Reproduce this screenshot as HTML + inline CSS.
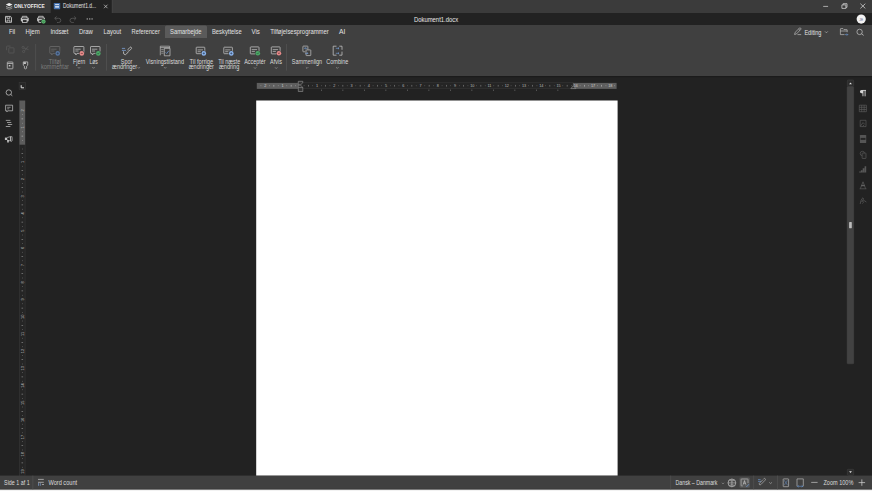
<!DOCTYPE html>
<html><head><meta charset="utf-8">
<style>
*{margin:0;padding:0}
html,body{width:872px;height:491px;overflow:hidden;background:#222}
svg{display:block;font-family:"Liberation Sans",sans-serif}
</style></head><body>
<svg width="872" height="491" viewBox="0 0 872 491">
<rect x="0" y="0" width="872" height="491" fill="#222222" />
<rect x="0" y="0" width="872" height="13" fill="#3b3b3b" />
<rect x="0" y="0" width="51" height="13" fill="#3b3b3b" />
<rect x="50.5" y="0" width="0.8" height="13" fill="#2c2c2c" />
<rect x="51" y="0" width="61" height="13" fill="#222222" />
<rect x="111.8" y="0" width="0.8" height="13" fill="#474747" />
<rect x="0" y="13" width="872" height="12" fill="#222222" />
<rect x="0" y="25" width="872" height="51" fill="#404040" />
<rect x="0" y="76" width="872" height="1.2" fill="#1b1b1b" />
<rect x="0" y="475.5" width="872" height="14" fill="#404040" />
<rect x="0" y="475.2" width="872" height="0.6" fill="#2e2e2e" />
<rect x="0" y="488.9" width="872" height="0.8" fill="#2a2a2a" />
<rect x="0" y="489.6" width="872" height="1.4" fill="#f2f2f2" />
<path d="M5.8 4.6 L9.15 3 L12.5 4.6 L9.15 6.2 Z" stroke="none" stroke-width="0.7" fill="#ececec" />
<path d="M6 6.4 L9.15 7.9 L12.3 6.4" stroke="#bdbdbd" stroke-width="0.8" fill="none" />
<path d="M6 8 L9.15 9.5 L12.3 8" stroke="#9a9a9a" stroke-width="0.8" fill="none" />
<text x="14.1" y="8.3" font-size="5.6" fill="#f0f0f0" text-anchor="start" font-weight="bold" textLength="30.5" lengthAdjust="spacingAndGlyphs" opacity="0.99">ONLYOFFICE</text>
<rect x="53.8" y="2.9" width="6.4" height="6.3" fill="#4572b0" rx="0.6"/>
<rect x="55.1" y="4.0" width="3.9" height="1.1" fill="#c9d7ec" />
<rect x="55.1" y="6.0" width="3.9" height="1.7" fill="#c9d7ec" />
<text x="63" y="8.2" font-size="6.3" fill="#e6e6e6" text-anchor="start" font-weight="normal" textLength="33" lengthAdjust="spacingAndGlyphs" >Dokument1.d...</text>
<path d="M104 4.7 L107.5 8.2 M107.5 4.7 L104 8.2" stroke="#cfcfcf" stroke-width="0.7" fill="none" />
<path d="M823.2 6.4 H828.1" stroke="#d8d8d8" stroke-width="0.7" fill="none" />
<path d="M841.9 4.9 H845.9 V8.4 H841.9 Z M843.1 4.9 V3.7 H847 V7.3 H845.9" stroke="#d8d8d8" stroke-width="0.75" fill="none" />
<path d="M860.4 3.7 L865.3 8.4 M865.3 3.7 L860.4 8.4" stroke="#d8d8d8" stroke-width="0.75" fill="none" />
<path d="M5.5 16.4 H10.5 L11.5 17.4 V22.3 H5.5 Z" stroke="#c6c6c6" stroke-width="0.9" fill="none" />
<path d="M7 16.5 V18.3 H9.8 V16.5" stroke="#c6c6c6" stroke-width="0.85" fill="none" />
<path d="M7.1 22.2 V20.1 H9.9 V22.2" stroke="#c6c6c6" stroke-width="0.85" fill="none" />
<path d="M22.3 17.9 V16.3 H26.900000000000002 V17.9" stroke="#c6c6c6" stroke-width="0.85" fill="none" />
<rect x="20.8" y="17.5" width="7.9" height="3.9" fill="#c6c6c6" rx="1"/>
<rect x="22.0" y="18.3" width="5.5" height="0.7" fill="#222222" />
<rect x="22.5" y="19.7" width="4.5" height="2.7" fill="#222222" stroke="#c6c6c6" stroke-width="0.85"/>
<path d="M38.6 17.9 V16.3 H43.199999999999996 V17.9" stroke="#c6c6c6" stroke-width="0.85" fill="none" />
<rect x="37.1" y="17.5" width="7.9" height="3.9" fill="#c6c6c6" rx="1"/>
<rect x="38.3" y="18.3" width="5.5" height="0.7" fill="#222222" />
<rect x="38.8" y="19.7" width="4.5" height="2.7" fill="#222222" stroke="#c6c6c6" stroke-width="0.85"/>
<circle cx="43.5" cy="21.6" r="2.5" fill="#222"/>
<circle cx="43.5" cy="21.6" r="2.15" fill="#58b46c"/>
<path d="M42.6 21.6 L43.3 22.3 L44.4 20.9" stroke="#214a2a" stroke-width="0.5" fill="none" />
<path d="M54.8 18.3 H58.6 Q60.8 18.3 60.8 20.4 Q60.8 22.5 58.6 22.5 H57 M56.6 16.5 L54.7 18.3 L56.6 20.1" stroke="#555" stroke-width="0.9" fill="none" />
<path d="M76 18.3 H72.2 Q70 18.3 70 20.4 Q70 22.5 72.2 22.5 H73.8 M74.2 16.5 L76.1 18.3 L74.2 20.1" stroke="#555" stroke-width="0.9" fill="none" />
<rect x="86.6" y="18.4" width="1.4" height="1.1" fill="#a8a8a8" />
<rect x="89.0" y="18.4" width="1.4" height="1.1" fill="#a8a8a8" />
<rect x="91.39999999999999" y="18.4" width="1.4" height="1.1" fill="#a8a8a8" />
<text x="413.9" y="22.2" font-size="6.6" fill="#e8e8e8" text-anchor="start" font-weight="normal" textLength="44.3" lengthAdjust="spacingAndGlyphs" >Dokument1.docx</text>
<circle cx="861.2" cy="19.1" r="4.6" fill="#f2f2f2"/>
<text x="861.2" y="20.8" font-size="3.2" fill="#5a6a8a" text-anchor="middle" font-weight="normal" >JE</text>
<rect x="165" y="25.5" width="42" height="12.5" fill="#5a5a5a" rx="1.5"/>
<rect x="165" y="33" width="42" height="5" fill="#5a5a5a" />
<text x="8.9" y="33.6" font-size="6.6" fill="#e2e2e2" text-anchor="start" font-weight="normal" textLength="6.300000000000001" lengthAdjust="spacingAndGlyphs" >Fil</text>
<text x="25.6" y="33.6" font-size="6.6" fill="#e2e2e2" text-anchor="start" font-weight="normal" textLength="14.1" lengthAdjust="spacingAndGlyphs" >Hjem</text>
<text x="50.4" y="33.6" font-size="6.6" fill="#e2e2e2" text-anchor="start" font-weight="normal" textLength="17.9" lengthAdjust="spacingAndGlyphs" >Indsæt</text>
<text x="78.89999999999999" y="33.6" font-size="6.6" fill="#e2e2e2" text-anchor="start" font-weight="normal" textLength="13.8" lengthAdjust="spacingAndGlyphs" >Draw</text>
<text x="103.5" y="33.6" font-size="6.6" fill="#e2e2e2" text-anchor="start" font-weight="normal" textLength="17.599999999999998" lengthAdjust="spacingAndGlyphs" >Layout</text>
<text x="131.60000000000002" y="33.6" font-size="6.6" fill="#e2e2e2" text-anchor="start" font-weight="normal" textLength="28.2" lengthAdjust="spacingAndGlyphs" >Referencer</text>
<text x="170.10000000000002" y="33.6" font-size="6.6" fill="#e2e2e2" text-anchor="start" font-weight="normal" textLength="31.4" lengthAdjust="spacingAndGlyphs" >Samarbejde</text>
<text x="212.0" y="33.6" font-size="6.6" fill="#e2e2e2" text-anchor="start" font-weight="normal" textLength="29.7" lengthAdjust="spacingAndGlyphs" >Beskyttelse</text>
<text x="251.60000000000002" y="33.6" font-size="6.6" fill="#e2e2e2" text-anchor="start" font-weight="normal" textLength="8.3" lengthAdjust="spacingAndGlyphs" >Vis</text>
<text x="270.2" y="33.6" font-size="6.6" fill="#e2e2e2" text-anchor="start" font-weight="normal" textLength="58.6" lengthAdjust="spacingAndGlyphs" >Tilføjelsesprogrammer</text>
<text x="339.1" y="33.6" font-size="6.6" fill="#e2e2e2" text-anchor="start" font-weight="normal" textLength="6.4" lengthAdjust="spacingAndGlyphs" >AI</text>
<path d="M794.6 34.5 L795.1 32.4 L799.4 28.2 Q800.1 27.6 800.7 28.2 Q801.3 28.8 800.7 29.5 L796.5 33.9 Z M798.6 29 L800 30.4 M797.5 34.6 H801.2" stroke="#c6c6c6" stroke-width="0.65" fill="none" />
<text x="804.4" y="34.9" font-size="6.6" fill="#e2e2e2" text-anchor="start" font-weight="normal" textLength="16.9" lengthAdjust="spacingAndGlyphs" >Editing</text>
<path d="M825 31.4 L826.4 32.8 L827.8 31.4" stroke="#c6c6c6" stroke-width="0.6" fill="none" />
<path d="M840.4 34.6 V29 Q840.4 28.6 840.8 28.6 H843 L844 29.6 H846.8 Q847.2 29.6 847.2 30 V32.2 M840.4 31 H847.2 M840.4 34.6 H844.5" stroke="#c6c6c6" stroke-width="0.65" fill="none" />
<path d="M845 34.6 H847.8 M846.8 33.6 L847.8 34.6 L846.8 35.6" stroke="#6fa0e0" stroke-width="0.6" fill="none" />
<circle cx="859.6" cy="31.9" r="2.7" stroke="#c6c6c6" stroke-width="0.7" fill="none"/>
<path d="M861.6 33.9 L863.7 35.4" stroke="#c6c6c6" stroke-width="0.75" fill="none" />
<path d="M6.6 50.2 V46.6 Q6.6 46.1 7.1 46.1 H10.6" stroke="#5c5c5c" stroke-width="0.7" fill="none" />
<path d="M8.8 48.3 Q8.8 47.8 9.3 47.8 H13.5 Q14 47.8 14 48.3 V52.5 Q14 53 13.5 53 H9.3 Q8.8 53 8.8 52.5 Z" stroke="#5c5c5c" stroke-width="0.7" fill="none" />
<circle cx="23.1" cy="47.4" r="1.1" stroke="#5c5c5c" stroke-width="0.65" fill="none"/>
<circle cx="23.6" cy="51.5" r="1.1" stroke="#5c5c5c" stroke-width="0.65" fill="none"/>
<path d="M24 48.1 L28.5 49.6 M24.6 50.8 L28.2 46.2" stroke="#5c5c5c" stroke-width="0.65" fill="none" />
<path d="M7.3 62.6 Q7.3 62 7.9 62 H12.3 Q12.9 62 12.9 62.6 V68.2 Q12.9 68.8 12.3 68.8 H7.9 Q7.3 68.8 7.3 68.2 Z M7.4 63.5 H12.8" stroke="#c6c6c6" stroke-width="0.75" fill="none" />
<rect x="8.8" y="65" width="1.6" height="1.4" fill="#c6c6c6" />
<path d="M23.3 61.9 H27.7 V65.2 L26.6 66.2 V68.3 Q25.5 69.4 24.4 68.3 V66.2 L23.3 65.2 Z" stroke="#c6c6c6" stroke-width="0.75" fill="none" />
<rect x="23.6" y="62.2" width="2.3" height="1.8" fill="#c6c6c6" />
<rect x="35.400000000000006" y="44" width="0.7" height="26.599999999999994" fill="#555555" />
<path d="M50.4 46.5 H59.199999999999996 Q59.8 46.5 59.8 47.1 V52.8 Q59.8 53.4 59.199999999999996 53.4 H52.8 L51.8 55.0 L51.4 53.4 H50.4 Q49.8 53.4 49.8 52.8 V47.1 Q49.8 46.5 50.4 46.5 Z" stroke="#6e6e6e" stroke-width="0.75" fill="none" />
<path d="M51.199999999999996 49.2 H56.599999999999994 M51.199999999999996 51.0 H54.4" stroke="#6e6e6e" stroke-width="0.7" fill="none" />
<circle cx="57.7" cy="53.4" r="2.8" fill="#404040"/>
<circle cx="57.7" cy="53.4" r="2.3" fill="#5876a0"/>
<path d="M56.6 53.4 H58.800000000000004 M57.7 52.3 V54.5" stroke="#26354a" stroke-width="0.55" fill="none" />
<path d="M74.5 46.5 H83.30000000000001 Q83.9 46.5 83.9 47.1 V52.8 Q83.9 53.4 83.30000000000001 53.4 H76.9 L75.9 55.0 L75.5 53.4 H74.5 Q73.9 53.4 73.9 52.8 V47.1 Q73.9 46.5 74.5 46.5 Z" stroke="#c6c6c6" stroke-width="0.75" fill="none" />
<path d="M75.30000000000001 49.2 H80.7 M75.30000000000001 51.0 H78.5" stroke="#c6c6c6" stroke-width="0.7" fill="none" />
<circle cx="81.8" cy="53.4" r="2.8" fill="#404040"/>
<circle cx="81.8" cy="53.4" r="2.3" fill="#e88c8c"/>
<path d="M80.7 53.4 H82.89999999999999" stroke="#5a2a2a" stroke-width="0.6" fill="none" />
<path d="M91.1 46.5 H99.4 Q100.0 46.5 100.0 47.1 V52.8 Q100.0 53.4 99.4 53.4 H93.5 L92.5 55.0 L92.1 53.4 H91.1 Q90.5 53.4 90.5 52.8 V47.1 Q90.5 46.5 91.1 46.5 Z" stroke="#c6c6c6" stroke-width="0.75" fill="none" />
<path d="M91.9 49.2 H97.3 M91.9 51.0 H95.1" stroke="#c6c6c6" stroke-width="0.7" fill="none" />
<circle cx="98.3" cy="53.4" r="2.8" fill="#404040"/>
<circle cx="98.3" cy="53.4" r="2.3" fill="#4caa68"/>
<path d="M97.3 53.4 L98.1 54.199999999999996 L99.39999999999999 52.6" stroke="#1f3d27" stroke-width="0.55" fill="none" />
<text x="54.9" y="63.7" font-size="6.5" fill="#7c7c7c" text-anchor="middle" font-weight="normal" textLength="12.2" lengthAdjust="spacingAndGlyphs" >Tilføj</text>
<text x="54.9" y="69.2" font-size="6.5" fill="#7c7c7c" text-anchor="middle" font-weight="normal" textLength="28" lengthAdjust="spacingAndGlyphs" >kommentar</text>
<text x="79.1" y="63.7" font-size="6.5" fill="#dadada" text-anchor="middle" font-weight="normal" textLength="12.2" lengthAdjust="spacingAndGlyphs" >Fjern</text>
<path d="M77.9 67.2 L79 68.3 L80.1 67.2" stroke="#bdbdbd" stroke-width="0.55" fill="none" />
<text x="93.6" y="63.7" font-size="6.5" fill="#dadada" text-anchor="middle" font-weight="normal" textLength="8.4" lengthAdjust="spacingAndGlyphs" >Løs</text>
<path d="M92.4 67.2 L93.5 68.3 L94.6 67.2" stroke="#bdbdbd" stroke-width="0.55" fill="none" />
<rect x="106.3" y="44" width="0.7" height="26.599999999999994" fill="#555555" />
<path d="M121.9 48.4 H125.1 M121.9 50.4 H126" stroke="#7ea6dc" stroke-width="0.75" fill="none" />
<path d="M123.5 51.4 Q123.1 54.7 125.1 54.7 Q125.8 54.7 126.5 53.9 L128.8 51.3" stroke="#c6c6c6" stroke-width="0.85" fill="none" />
<path d="M128 49.4 L130 47.3 Q130.6 46.7 131.2 47.3 L131.4 47.5 Q132 48.1 131.4 48.7 L129.4 50.8 Z" stroke="#c6c6c6" stroke-width="0.8" fill="none" />
<path d="M126.3 52.1 L128.2 50.1" stroke="#7e7e7e" stroke-width="0.6" fill="none" />
<text x="126.5" y="64" font-size="6.5" fill="#dadada" text-anchor="middle" font-weight="normal" textLength="11.5" lengthAdjust="spacingAndGlyphs" >Spor</text>
<text x="124.6" y="69.2" font-size="6.5" fill="#dadada" text-anchor="middle" font-weight="normal" textLength="25.2" lengthAdjust="spacingAndGlyphs" >ændringer</text>
<path d="M137.70000000000002 67.2 L138.8 68.3 L139.9 67.2" stroke="#bdbdbd" stroke-width="0.55" fill="none" />
<path d="M164.3 48.3 H170 V55.8 H164.3 Z" stroke="#c6c6c6" stroke-width="0.7" fill="none" />
<path d="M160.3 55.3 V46.2 H169.6 V48.2 M160.3 47.6 H169.6" stroke="#c6c6c6" stroke-width="0.65" fill="none" />
<path d="M161.2 49.6 H163.6 M161.2 51.4 H163.6 M161.2 53.2 H163.6" stroke="#c6c6c6" stroke-width="0.55" fill="none" />
<path d="M165.6 52.4 L166.7 53.5 L168.8 50.8" stroke="#6f9fe0" stroke-width="0.7" fill="none" />
<text x="164.9" y="64" font-size="6.5" fill="#dadada" text-anchor="middle" font-weight="normal" textLength="38.2" lengthAdjust="spacingAndGlyphs" >Visningstilstand</text>
<path d="M164.1 67.2 L165.2 68.3 L166.29999999999998 67.2" stroke="#bdbdbd" stroke-width="0.55" fill="none" />
<path d="M196.79999999999998 47.2 H204.2 Q204.79999999999998 47.2 204.79999999999998 47.800000000000004 V53.1 Q204.79999999999998 53.7 204.2 53.7 H196.79999999999998 Q196.2 53.7 196.2 53.1 V47.800000000000004 Q196.2 47.2 196.79999999999998 47.2 Z" stroke="#c6c6c6" stroke-width="0.75" fill="none" />
<path d="M197.6 49.900000000000006 H203.0 M197.6 51.7 H200.79999999999998" stroke="#c6c6c6" stroke-width="0.7" fill="none" />
<circle cx="203.8" cy="53.4" r="2.8" fill="#404040"/>
<circle cx="203.8" cy="53.4" r="2.3" fill="#8cb6f0"/>
<path d="M202.70000000000002 53.4 H204.9 M203.8 52.3 V54.5" stroke="#26354a" stroke-width="0.55" fill="none" />
<path d="M224.4 47.2 H231.8 Q232.4 47.2 232.4 47.800000000000004 V53.1 Q232.4 53.7 231.8 53.7 H224.4 Q223.8 53.7 223.8 53.1 V47.800000000000004 Q223.8 47.2 224.4 47.2 Z" stroke="#c6c6c6" stroke-width="0.75" fill="none" />
<path d="M225.20000000000002 49.900000000000006 H230.60000000000002 M225.20000000000002 51.7 H228.4" stroke="#c6c6c6" stroke-width="0.7" fill="none" />
<circle cx="231.3" cy="53.4" r="2.8" fill="#404040"/>
<circle cx="231.3" cy="53.4" r="2.3" fill="#8cb6f0"/>
<path d="M230.20000000000002 53.4 H232.4 M231.3 52.3 V54.5" stroke="#26354a" stroke-width="0.55" fill="none" />
<text x="201.4" y="63.7" font-size="6.5" fill="#dadada" text-anchor="middle" font-weight="normal" textLength="23.6" lengthAdjust="spacingAndGlyphs" >Til forrige</text>
<text x="201.3" y="69" font-size="6.5" fill="#dadada" text-anchor="middle" font-weight="normal" textLength="25.2" lengthAdjust="spacingAndGlyphs" >ændringer</text>
<text x="229.2" y="63.7" font-size="6.5" fill="#dadada" text-anchor="middle" font-weight="normal" textLength="22" lengthAdjust="spacingAndGlyphs" >Til næste</text>
<text x="229.1" y="69" font-size="6.5" fill="#dadada" text-anchor="middle" font-weight="normal" textLength="20.4" lengthAdjust="spacingAndGlyphs" >ændring</text>
<path d="M250.9 46.9 H258.4 Q259.0 46.9 259.0 47.5 V53.3 Q259.0 53.9 258.4 53.9 H250.9 Q250.3 53.9 250.3 53.3 V47.5 Q250.3 46.9 250.9 46.9 Z" stroke="#c6c6c6" stroke-width="0.75" fill="none" />
<path d="M251.70000000000002 49.6 H257.1 M251.70000000000002 51.4 H254.9" stroke="#c6c6c6" stroke-width="0.7" fill="none" />
<circle cx="257.8" cy="53.3" r="2.8" fill="#404040"/>
<circle cx="257.8" cy="53.3" r="2.3" fill="#4caa68"/>
<path d="M256.8 53.3 L257.6 54.099999999999994 L258.90000000000003 52.5" stroke="#1f3d27" stroke-width="0.55" fill="none" />
<path d="M271.90000000000003 46.9 H279.5 Q280.1 46.9 280.1 47.5 V53.3 Q280.1 53.9 279.5 53.9 H271.90000000000003 Q271.3 53.9 271.3 53.3 V47.5 Q271.3 46.9 271.90000000000003 46.9 Z" stroke="#c6c6c6" stroke-width="0.75" fill="none" />
<path d="M272.7 49.6 H278.1 M272.7 51.4 H275.90000000000003" stroke="#c6c6c6" stroke-width="0.7" fill="none" />
<circle cx="278.9" cy="53.3" r="2.8" fill="#404040"/>
<circle cx="278.9" cy="53.3" r="2.3" fill="#e88c8c"/>
<path d="M278.09999999999997 52.5 L279.7 54.099999999999994 M279.7 52.5 L278.09999999999997 54.099999999999994" stroke="#5a2a2a" stroke-width="0.55" fill="none" />
<text x="254.9" y="63.8" font-size="6.5" fill="#dadada" text-anchor="middle" font-weight="normal" textLength="21.5" lengthAdjust="spacingAndGlyphs" >Acceptér</text>
<path d="M254.0 67.4 L255.1 68.5 L256.2 67.4" stroke="#bdbdbd" stroke-width="0.55" fill="none" />
<text x="276" y="63.8" font-size="6.5" fill="#dadada" text-anchor="middle" font-weight="normal" textLength="11.9" lengthAdjust="spacingAndGlyphs" >Afvis</text>
<path d="M275.09999999999997 67.4 L276.2 68.5 L277.3 67.4" stroke="#bdbdbd" stroke-width="0.55" fill="none" />
<rect x="286.0" y="44" width="0.7" height="26.599999999999994" fill="#555555" />
<path d="M303.5 46.1 H307.4 Q307.9 46.1 307.9 46.6 V49.6 M303.5 46.1 Q302.9 46.1 302.9 46.6 V51.3 Q302.9 51.8 303.5 51.8 H305.2" stroke="#c6c6c6" stroke-width="0.7" fill="none" />
<path d="M306.6 49.9 H310.3 Q310.8 49.9 310.8 50.4 V55.1 Q310.8 55.6 310.3 55.6 H306.6 Q306 55.6 306 55.1 V50.4 Q306 49.9 306.6 49.9 Z" stroke="#c6c6c6" stroke-width="0.7" fill="none" />
<path d="M307.2 48.3 H304.6 M305.6 47.4 L304.6 48.3 L305.6 49.2 M305.2 53.4 H308 M307.1 52.5 L308 53.4 L307.1 54.3" stroke="#7aa6e4" stroke-width="0.6" fill="none" />
<text x="307" y="63.8" font-size="6.5" fill="#dadada" text-anchor="middle" font-weight="normal" textLength="30.3" lengthAdjust="spacingAndGlyphs" >Sammenlign</text>
<path d="M305.9 67.30000000000001 L307 68.4 L308.1 67.30000000000001" stroke="#bdbdbd" stroke-width="0.55" fill="none" />
<path d="M336.5 46.2 H333.2 V55.2 H336.5 M339.3 46.2 H342 V49.8 M339.3 55.2 H342 V51.6" stroke="#c6c6c6" stroke-width="0.75" fill="none" />
<path d="M335.8 48.3 H339 M338.1 47.5 L339 48.3 L338.1 49.1 M335.8 53.3 H339 M338.1 52.5 L339 53.3 L338.1 54.1" stroke="#7aa6e4" stroke-width="0.6" fill="none" />
<text x="337.35" y="63.8" font-size="6.5" fill="#dadada" text-anchor="middle" font-weight="normal" textLength="22.1" lengthAdjust="spacingAndGlyphs" >Combine</text>
<path d="M336.2 67.30000000000001 L337.3 68.4 L338.40000000000003 67.30000000000001" stroke="#bdbdbd" stroke-width="0.55" fill="none" />
<circle cx="8.8" cy="92.5" r="2.7" stroke="#c6c6c6" stroke-width="0.75" fill="none"/>
<path d="M10.8 94.5 L12.3 95.8" stroke="#c6c6c6" stroke-width="0.8" fill="none" />
<path d="M5.6 105.2 H12.6 V110.8 H7.6 L6.9 111.9 V110.8 H5.6 Z" stroke="#c6c6c6" stroke-width="0.7" fill="none" />
<path d="M7.2 107.3 H10.6 M7.2 108.8 H9.3" stroke="#c6c6c6" stroke-width="0.6" fill="none" />
<path d="M5.8 120.4 H10.4 M7 122.5 H11.3 M7.9 124.5 H12.2 M5.8 126.5 H10.4" stroke="#c6c6c6" stroke-width="0.7" fill="none" />
<rect x="4.9" y="137.6" width="2.3" height="2.4" fill="#c6c6c6" />
<path d="M7.2 137.5 L10.6 136.6 V141 L7.2 140.1" stroke="#c6c6c6" stroke-width="0.7" fill="none" />
<ellipse cx="11.3" cy="138.8" rx="0.9" ry="2.7" stroke="#c6c6c6" stroke-width="0.7" fill="none"/>
<rect x="7.2" y="140" width="1.6" height="2.5" fill="#c6c6c6" />
<rect x="19.1" y="82.4" width="6.6" height="7.3" fill="#262626" stroke="#3c3c3c" stroke-width="0.5"/>
<path d="M21.2 85.2 V87.8 H24" stroke="#e0e0e0" stroke-width="1.0" fill="none" />
<rect x="19.5" y="100.7" width="5.6" height="375" fill="#252525" stroke="#383838" stroke-width="0.6"/>
<rect x="19.5" y="100.7" width="5.6" height="44" fill="#5c5c5c" />
<text x="22.3" y="110.29999999999998" font-size="3.9" fill="#c8c8c8" text-anchor="middle" transform="rotate(-90 22.3 110.29999999999998) translate(0 1.4)">2</text>
<rect x="22" y="114.29999999999998" width="0.6" height="0.6" fill="#c0c0c0" />
<rect x="21.5" y="118.59999999999998" width="1.6" height="0.6" fill="#c0c0c0" />
<rect x="22" y="122.89999999999999" width="0.6" height="0.6" fill="#c0c0c0" />
<text x="22.3" y="127.49999999999999" font-size="3.9" fill="#c8c8c8" text-anchor="middle" transform="rotate(-90 22.3 127.49999999999999) translate(0 1.4)">1</text>
<rect x="22" y="131.49999999999997" width="0.6" height="0.6" fill="#c0c0c0" />
<rect x="21.5" y="135.79999999999998" width="1.6" height="0.6" fill="#c0c0c0" />
<rect x="22" y="140.09999999999997" width="0.6" height="0.6" fill="#c0c0c0" />
<rect x="22" y="148.7" width="0.6" height="0.6" fill="#9a9a9a" />
<rect x="21.5" y="152.99999999999997" width="1.6" height="0.6" fill="#9a9a9a" />
<rect x="22" y="157.29999999999998" width="0.6" height="0.6" fill="#9a9a9a" />
<text x="22.3" y="161.89999999999998" font-size="3.9" fill="#c0c0c0" text-anchor="middle" transform="rotate(-90 22.3 161.89999999999998) translate(0 1.4)">1</text>
<rect x="22" y="165.89999999999998" width="0.6" height="0.6" fill="#9a9a9a" />
<rect x="21.5" y="170.19999999999996" width="1.6" height="0.6" fill="#9a9a9a" />
<rect x="22" y="174.49999999999997" width="0.6" height="0.6" fill="#9a9a9a" />
<text x="22.3" y="179.1" font-size="3.9" fill="#c0c0c0" text-anchor="middle" transform="rotate(-90 22.3 179.1) translate(0 1.4)">2</text>
<rect x="22" y="183.1" width="0.6" height="0.6" fill="#9a9a9a" />
<rect x="21.5" y="187.39999999999998" width="1.6" height="0.6" fill="#9a9a9a" />
<rect x="22" y="191.7" width="0.6" height="0.6" fill="#9a9a9a" />
<text x="22.3" y="196.29999999999998" font-size="3.9" fill="#c0c0c0" text-anchor="middle" transform="rotate(-90 22.3 196.29999999999998) translate(0 1.4)">3</text>
<rect x="22" y="200.29999999999998" width="0.6" height="0.6" fill="#9a9a9a" />
<rect x="21.5" y="204.59999999999997" width="1.6" height="0.6" fill="#9a9a9a" />
<rect x="22" y="208.89999999999998" width="0.6" height="0.6" fill="#9a9a9a" />
<text x="22.3" y="213.5" font-size="3.9" fill="#c0c0c0" text-anchor="middle" transform="rotate(-90 22.3 213.5) translate(0 1.4)">4</text>
<rect x="22" y="217.5" width="0.6" height="0.6" fill="#9a9a9a" />
<rect x="21.5" y="221.79999999999998" width="1.6" height="0.6" fill="#9a9a9a" />
<rect x="22" y="226.1" width="0.6" height="0.6" fill="#9a9a9a" />
<text x="22.3" y="230.7" font-size="3.9" fill="#c0c0c0" text-anchor="middle" transform="rotate(-90 22.3 230.7) translate(0 1.4)">5</text>
<rect x="22" y="234.7" width="0.6" height="0.6" fill="#9a9a9a" />
<rect x="21.5" y="238.99999999999997" width="1.6" height="0.6" fill="#9a9a9a" />
<rect x="22" y="243.29999999999998" width="0.6" height="0.6" fill="#9a9a9a" />
<text x="22.3" y="247.89999999999998" font-size="3.9" fill="#c0c0c0" text-anchor="middle" transform="rotate(-90 22.3 247.89999999999998) translate(0 1.4)">6</text>
<rect x="22" y="251.89999999999998" width="0.6" height="0.6" fill="#9a9a9a" />
<rect x="21.5" y="256.2" width="1.6" height="0.6" fill="#9a9a9a" />
<rect x="22" y="260.49999999999994" width="0.6" height="0.6" fill="#9a9a9a" />
<text x="22.3" y="265.09999999999997" font-size="3.9" fill="#c0c0c0" text-anchor="middle" transform="rotate(-90 22.3 265.09999999999997) translate(0 1.4)">7</text>
<rect x="22" y="269.09999999999997" width="0.6" height="0.6" fill="#9a9a9a" />
<rect x="21.5" y="273.4" width="1.6" height="0.6" fill="#9a9a9a" />
<rect x="22" y="277.69999999999993" width="0.6" height="0.6" fill="#9a9a9a" />
<text x="22.3" y="282.29999999999995" font-size="3.9" fill="#c0c0c0" text-anchor="middle" transform="rotate(-90 22.3 282.29999999999995) translate(0 1.4)">8</text>
<rect x="22" y="286.29999999999995" width="0.6" height="0.6" fill="#9a9a9a" />
<rect x="21.5" y="290.59999999999997" width="1.6" height="0.6" fill="#9a9a9a" />
<rect x="22" y="294.8999999999999" width="0.6" height="0.6" fill="#9a9a9a" />
<text x="22.3" y="299.5" font-size="3.9" fill="#c0c0c0" text-anchor="middle" transform="rotate(-90 22.3 299.5) translate(0 1.4)">9</text>
<rect x="22" y="303.5" width="0.6" height="0.6" fill="#9a9a9a" />
<rect x="21.5" y="307.8" width="1.6" height="0.6" fill="#9a9a9a" />
<rect x="22" y="312.09999999999997" width="0.6" height="0.6" fill="#9a9a9a" />
<text x="22.3" y="316.7" font-size="3.9" fill="#c0c0c0" text-anchor="middle" transform="rotate(-90 22.3 316.7) translate(0 1.4)">10</text>
<rect x="22" y="320.7" width="0.6" height="0.6" fill="#9a9a9a" />
<rect x="21.5" y="325.0" width="1.6" height="0.6" fill="#9a9a9a" />
<rect x="22" y="329.29999999999995" width="0.6" height="0.6" fill="#9a9a9a" />
<text x="22.3" y="333.9" font-size="3.9" fill="#c0c0c0" text-anchor="middle" transform="rotate(-90 22.3 333.9) translate(0 1.4)">11</text>
<rect x="22" y="337.9" width="0.6" height="0.6" fill="#9a9a9a" />
<rect x="21.5" y="342.2" width="1.6" height="0.6" fill="#9a9a9a" />
<rect x="22" y="346.49999999999994" width="0.6" height="0.6" fill="#9a9a9a" />
<text x="22.3" y="351.09999999999997" font-size="3.9" fill="#c0c0c0" text-anchor="middle" transform="rotate(-90 22.3 351.09999999999997) translate(0 1.4)">12</text>
<rect x="22" y="355.09999999999997" width="0.6" height="0.6" fill="#9a9a9a" />
<rect x="21.5" y="359.4" width="1.6" height="0.6" fill="#9a9a9a" />
<rect x="22" y="363.69999999999993" width="0.6" height="0.6" fill="#9a9a9a" />
<text x="22.3" y="368.29999999999995" font-size="3.9" fill="#c0c0c0" text-anchor="middle" transform="rotate(-90 22.3 368.29999999999995) translate(0 1.4)">13</text>
<rect x="22" y="372.29999999999995" width="0.6" height="0.6" fill="#9a9a9a" />
<rect x="21.5" y="376.59999999999997" width="1.6" height="0.6" fill="#9a9a9a" />
<rect x="22" y="380.8999999999999" width="0.6" height="0.6" fill="#9a9a9a" />
<text x="22.3" y="385.5" font-size="3.9" fill="#c0c0c0" text-anchor="middle" transform="rotate(-90 22.3 385.5) translate(0 1.4)">14</text>
<rect x="22" y="389.5" width="0.6" height="0.6" fill="#9a9a9a" />
<rect x="21.5" y="393.8" width="1.6" height="0.6" fill="#9a9a9a" />
<rect x="22" y="398.09999999999997" width="0.6" height="0.6" fill="#9a9a9a" />
<text x="22.3" y="402.7" font-size="3.9" fill="#c0c0c0" text-anchor="middle" transform="rotate(-90 22.3 402.7) translate(0 1.4)">15</text>
<rect x="22" y="406.7" width="0.6" height="0.6" fill="#9a9a9a" />
<rect x="21.5" y="411.0" width="1.6" height="0.6" fill="#9a9a9a" />
<rect x="22" y="415.29999999999995" width="0.6" height="0.6" fill="#9a9a9a" />
<text x="22.3" y="419.9" font-size="3.9" fill="#c0c0c0" text-anchor="middle" transform="rotate(-90 22.3 419.9) translate(0 1.4)">16</text>
<rect x="22" y="423.9" width="0.6" height="0.6" fill="#9a9a9a" />
<rect x="21.5" y="428.2" width="1.6" height="0.6" fill="#9a9a9a" />
<rect x="22" y="432.49999999999994" width="0.6" height="0.6" fill="#9a9a9a" />
<text x="22.3" y="437.09999999999997" font-size="3.9" fill="#c0c0c0" text-anchor="middle" transform="rotate(-90 22.3 437.09999999999997) translate(0 1.4)">17</text>
<rect x="22" y="441.09999999999997" width="0.6" height="0.6" fill="#9a9a9a" />
<rect x="21.5" y="445.4" width="1.6" height="0.6" fill="#9a9a9a" />
<rect x="22" y="449.69999999999993" width="0.6" height="0.6" fill="#9a9a9a" />
<text x="22.3" y="454.29999999999995" font-size="3.9" fill="#c0c0c0" text-anchor="middle" transform="rotate(-90 22.3 454.29999999999995) translate(0 1.4)">18</text>
<rect x="22" y="458.29999999999995" width="0.6" height="0.6" fill="#9a9a9a" />
<rect x="21.5" y="462.59999999999997" width="1.6" height="0.6" fill="#9a9a9a" />
<rect x="22" y="466.8999999999999" width="0.6" height="0.6" fill="#9a9a9a" />
<text x="22.3" y="471.5" font-size="3.9" fill="#c0c0c0" text-anchor="middle" transform="rotate(-90 22.3 471.5) translate(0 1.4)">19</text>
<rect x="297.9" y="82.6" width="275.1" height="6.1" fill="#252525" stroke="#363636" stroke-width="0.6"/>
<rect x="256.8" y="82.9" width="41.1" height="6" fill="#5e5e5e" />
<rect x="573" y="82.9" width="43.6" height="6" fill="#5e5e5e" />
<rect x="260.6375" y="85.5" width="0.6" height="0.6" fill="#c4c4c4" />
<text x="265.25" y="87.4" font-size="3.8" fill="#d0d0d0" text-anchor="middle" font-weight="normal" >2</text>
<rect x="269.2625" y="85.5" width="0.6" height="0.6" fill="#c4c4c4" />
<rect x="273.575" y="84.9" width="0.6" height="1.7" fill="#c4c4c4" />
<rect x="277.8875" y="85.5" width="0.6" height="0.6" fill="#c4c4c4" />
<text x="282.5" y="87.4" font-size="3.8" fill="#d0d0d0" text-anchor="middle" font-weight="normal" >1</text>
<rect x="286.5125" y="85.5" width="0.6" height="0.6" fill="#c4c4c4" />
<rect x="290.825" y="84.9" width="0.6" height="1.7" fill="#c4c4c4" />
<rect x="295.1375" y="85.5" width="0.6" height="0.6" fill="#c4c4c4" />
<rect x="303.7625" y="85.5" width="0.6" height="0.6" fill="#8e8e8e" />
<rect x="308.075" y="84.9" width="0.6" height="1.7" fill="#8e8e8e" />
<rect x="312.3875" y="85.5" width="0.6" height="0.6" fill="#8e8e8e" />
<text x="317.0" y="87.4" font-size="3.8" fill="#b8b8b8" text-anchor="middle" font-weight="normal" >1</text>
<rect x="321.0125" y="85.5" width="0.6" height="0.6" fill="#8e8e8e" />
<rect x="325.325" y="84.9" width="0.6" height="1.7" fill="#8e8e8e" />
<rect x="329.6375" y="85.5" width="0.6" height="0.6" fill="#8e8e8e" />
<text x="334.25" y="87.4" font-size="3.8" fill="#b8b8b8" text-anchor="middle" font-weight="normal" >2</text>
<rect x="338.2625" y="85.5" width="0.6" height="0.6" fill="#8e8e8e" />
<rect x="342.575" y="84.9" width="0.6" height="1.7" fill="#8e8e8e" />
<rect x="346.8875" y="85.5" width="0.6" height="0.6" fill="#8e8e8e" />
<text x="351.5" y="87.4" font-size="3.8" fill="#b8b8b8" text-anchor="middle" font-weight="normal" >3</text>
<rect x="355.5125" y="85.5" width="0.6" height="0.6" fill="#8e8e8e" />
<rect x="359.825" y="84.9" width="0.6" height="1.7" fill="#8e8e8e" />
<rect x="364.1375" y="85.5" width="0.6" height="0.6" fill="#8e8e8e" />
<text x="368.75" y="87.4" font-size="3.8" fill="#b8b8b8" text-anchor="middle" font-weight="normal" >4</text>
<rect x="372.7625" y="85.5" width="0.6" height="0.6" fill="#8e8e8e" />
<rect x="377.075" y="84.9" width="0.6" height="1.7" fill="#8e8e8e" />
<rect x="381.3875" y="85.5" width="0.6" height="0.6" fill="#8e8e8e" />
<text x="386.0" y="87.4" font-size="3.8" fill="#b8b8b8" text-anchor="middle" font-weight="normal" >5</text>
<rect x="390.0125" y="85.5" width="0.6" height="0.6" fill="#8e8e8e" />
<rect x="394.325" y="84.9" width="0.6" height="1.7" fill="#8e8e8e" />
<rect x="398.6375" y="85.5" width="0.6" height="0.6" fill="#8e8e8e" />
<text x="403.25" y="87.4" font-size="3.8" fill="#b8b8b8" text-anchor="middle" font-weight="normal" >6</text>
<rect x="407.2625" y="85.5" width="0.6" height="0.6" fill="#8e8e8e" />
<rect x="411.575" y="84.9" width="0.6" height="1.7" fill="#8e8e8e" />
<rect x="415.8875" y="85.5" width="0.6" height="0.6" fill="#8e8e8e" />
<text x="420.5" y="87.4" font-size="3.8" fill="#b8b8b8" text-anchor="middle" font-weight="normal" >7</text>
<rect x="424.5125" y="85.5" width="0.6" height="0.6" fill="#8e8e8e" />
<rect x="428.825" y="84.9" width="0.6" height="1.7" fill="#8e8e8e" />
<rect x="433.1375" y="85.5" width="0.6" height="0.6" fill="#8e8e8e" />
<text x="437.75" y="87.4" font-size="3.8" fill="#b8b8b8" text-anchor="middle" font-weight="normal" >8</text>
<rect x="441.7625" y="85.5" width="0.6" height="0.6" fill="#8e8e8e" />
<rect x="446.075" y="84.9" width="0.6" height="1.7" fill="#8e8e8e" />
<rect x="450.3875" y="85.5" width="0.6" height="0.6" fill="#8e8e8e" />
<text x="455.0" y="87.4" font-size="3.8" fill="#b8b8b8" text-anchor="middle" font-weight="normal" >9</text>
<rect x="459.0125" y="85.5" width="0.6" height="0.6" fill="#8e8e8e" />
<rect x="463.325" y="84.9" width="0.6" height="1.7" fill="#8e8e8e" />
<rect x="467.6375" y="85.5" width="0.6" height="0.6" fill="#8e8e8e" />
<text x="472.25" y="87.4" font-size="3.8" fill="#b8b8b8" text-anchor="middle" font-weight="normal" >10</text>
<rect x="476.2625" y="85.5" width="0.6" height="0.6" fill="#8e8e8e" />
<rect x="480.575" y="84.9" width="0.6" height="1.7" fill="#8e8e8e" />
<rect x="484.8875" y="85.5" width="0.6" height="0.6" fill="#8e8e8e" />
<text x="489.5" y="87.4" font-size="3.8" fill="#b8b8b8" text-anchor="middle" font-weight="normal" >11</text>
<rect x="493.5125" y="85.5" width="0.6" height="0.6" fill="#8e8e8e" />
<rect x="497.825" y="84.9" width="0.6" height="1.7" fill="#8e8e8e" />
<rect x="502.1375" y="85.5" width="0.6" height="0.6" fill="#8e8e8e" />
<text x="506.75" y="87.4" font-size="3.8" fill="#b8b8b8" text-anchor="middle" font-weight="normal" >12</text>
<rect x="510.7625" y="85.5" width="0.6" height="0.6" fill="#8e8e8e" />
<rect x="515.075" y="84.9" width="0.6" height="1.7" fill="#8e8e8e" />
<rect x="519.3875" y="85.5" width="0.6" height="0.6" fill="#8e8e8e" />
<text x="524.0" y="87.4" font-size="3.8" fill="#b8b8b8" text-anchor="middle" font-weight="normal" >13</text>
<rect x="528.0125" y="85.5" width="0.6" height="0.6" fill="#8e8e8e" />
<rect x="532.325" y="84.9" width="0.6" height="1.7" fill="#8e8e8e" />
<rect x="536.6375" y="85.5" width="0.6" height="0.6" fill="#8e8e8e" />
<text x="541.25" y="87.4" font-size="3.8" fill="#b8b8b8" text-anchor="middle" font-weight="normal" >14</text>
<rect x="545.2625" y="85.5" width="0.6" height="0.6" fill="#8e8e8e" />
<rect x="549.575" y="84.9" width="0.6" height="1.7" fill="#8e8e8e" />
<rect x="553.8875" y="85.5" width="0.6" height="0.6" fill="#8e8e8e" />
<text x="558.5" y="87.4" font-size="3.8" fill="#b8b8b8" text-anchor="middle" font-weight="normal" >15</text>
<rect x="562.5125" y="85.5" width="0.6" height="0.6" fill="#8e8e8e" />
<rect x="566.825" y="84.9" width="0.6" height="1.7" fill="#8e8e8e" />
<rect x="571.1375" y="85.5" width="0.6" height="0.6" fill="#8e8e8e" />
<text x="575.75" y="87.4" font-size="3.8" fill="#d0d0d0" text-anchor="middle" font-weight="normal" >16</text>
<rect x="579.7625" y="85.5" width="0.6" height="0.6" fill="#c4c4c4" />
<rect x="584.075" y="84.9" width="0.6" height="1.7" fill="#c4c4c4" />
<rect x="588.3875" y="85.5" width="0.6" height="0.6" fill="#c4c4c4" />
<text x="593.0" y="87.4" font-size="3.8" fill="#d0d0d0" text-anchor="middle" font-weight="normal" >17</text>
<rect x="597.0125" y="85.5" width="0.6" height="0.6" fill="#c4c4c4" />
<rect x="601.325" y="84.9" width="0.6" height="1.7" fill="#c4c4c4" />
<rect x="605.6375" y="85.5" width="0.6" height="0.6" fill="#c4c4c4" />
<text x="610.25" y="87.4" font-size="3.8" fill="#d0d0d0" text-anchor="middle" font-weight="normal" >18</text>
<rect x="614.2625" y="85.5" width="0.6" height="0.6" fill="#c4c4c4" />
<rect x="321.09999999999997" y="89.6" width="0.6" height="1.2" fill="#8a8a8a" />
<rect x="342.59999999999997" y="89.6" width="0.6" height="1.2" fill="#8a8a8a" />
<rect x="364.09999999999997" y="89.6" width="0.6" height="1.2" fill="#8a8a8a" />
<rect x="385.59999999999997" y="89.6" width="0.6" height="1.2" fill="#8a8a8a" />
<rect x="407.09999999999997" y="89.6" width="0.6" height="1.2" fill="#8a8a8a" />
<rect x="428.59999999999997" y="89.6" width="0.6" height="1.2" fill="#8a8a8a" />
<rect x="450.09999999999997" y="89.6" width="0.6" height="1.2" fill="#8a8a8a" />
<rect x="471.59999999999997" y="89.6" width="0.6" height="1.2" fill="#8a8a8a" />
<rect x="493.09999999999997" y="89.6" width="0.6" height="1.2" fill="#8a8a8a" />
<rect x="514.6" y="89.6" width="0.6" height="1.2" fill="#8a8a8a" />
<rect x="536.1" y="89.6" width="0.6" height="1.2" fill="#8a8a8a" />
<rect x="557.6" y="89.6" width="0.6" height="1.2" fill="#8a8a8a" />
<path d="M298.3 81.3 H302.8 V82.8 L300.4 85 H298.3 Z" stroke="#a0a0a0" stroke-width="0.55" fill="#333" />
<path d="M298.3 85.1 H300.4 L302.8 87.3 V91.5 H298.3 Z M298.3 87.6 H302.8" stroke="#a0a0a0" stroke-width="0.55" fill="#333" />
<path d="M570.8 88.6 L573.3 85.8 L575.8 88.6 Z" stroke="#a0a0a0" stroke-width="0.55" fill="#333" />
<rect x="256.2" y="100.5" width="361.4" height="375" fill="#ffffff" />
<rect x="847.3" y="80" width="6.4" height="6.6" fill="#2c2c2c" rx="0.9" stroke="#444" stroke-width="0.5"/>
<path d="M849.1 84.3 L850.5 82.4 L851.9 84.3 Z" stroke="none" stroke-width="0.7" fill="#e8e8e8" />
<rect x="847.1" y="86.8" width="6.6" height="277" fill="#424242" rx="0.8" stroke="#4a4a4a" stroke-width="0.4"/>
<rect x="849.1" y="222" width="2.7" height="6.2" fill="#bdbdbd" rx="0.4"/>
<rect x="847.3" y="469.3" width="6.4" height="6.1" fill="#2c2c2c" rx="0.9" stroke="#444" stroke-width="0.5"/>
<path d="M849.1 471.2 L850.5 473.1 L851.9 471.2 Z" stroke="none" stroke-width="0.7" fill="#e8e8e8" />
<path d="M863.4 90 H861.5 Q859.9 90 859.9 91.6 Q859.9 93.2 861.5 93.2 H862.5 V96.3 H863.4 Z" stroke="none" stroke-width="0.7" fill="#d4d4d4" />
<path d="M865.1 90.3 V96.3 M862.6 90.45 H866" stroke="#d4d4d4" stroke-width="0.9" fill="none" />
<path d="M859.3 105.2 H866.4 V111.7 H859.3 Z M859.3 107.3 H866.4 M859.3 109.5 H866.4 M861.7 105.2 V111.7 M864.1 105.2 V111.7" stroke="#626262" stroke-width="0.6" fill="none" />
<path d="M860.2 120.3 H866 V126.6 H860.2 Z M860.4 126.2 L863 122.6 L864.6 124.2 M862.6 126.4 L864.2 124.8" stroke="#626262" stroke-width="0.6" fill="none" />
<rect x="859.9" y="134.9" width="6.3" height="8.1" fill="#555" rx="0.6"/>
<rect x="860.6" y="137.9" width="4.9" height="2.0" fill="#262626" />
<circle cx="862.4" cy="153.5" r="2.2" stroke="#626262" stroke-width="0.6" fill="none"/>
<rect x="862.1" y="153.1" width="3.9" height="5.4" fill="#262626" stroke="#626262" stroke-width="0.6" rx="0.5"/>
<path d="M859.2 172.6 H866.2 V166.3 H864.6 V168.3 H862.7 V170.2 H860.9 V171.4 H859.2 Z" stroke="none" stroke-width="0.7" fill="#5a5a5a" />
<path d="M862.7 170.2 V172.6 M864.6 168.3 V172.6" stroke="#2c2c2c" stroke-width="0.35" fill="none" />
<path d="M859.6 188.8 H866.4 M860.4 188.6 L863 181.8 L865.6 188.6" stroke="#626262" stroke-width="0.65" fill="none" />
<rect x="861.2" y="184.9" width="3.6" height="1.3" fill="#626262" />
<path d="M860.2 204 Q860.6 200.6 862 198.6 Q863 197.3 863.4 198.4 Q863.8 199.8 861.6 201.8 M862.4 201.4 Q864 199.6 866.4 202 M862.4 203.6 L863.6 202.2" stroke="#626262" stroke-width="0.65" fill="none" />
<text x="4.1" y="485.2" font-size="6.4" fill="#dcdcdc" text-anchor="start" font-weight="normal" textLength="25.6" lengthAdjust="spacingAndGlyphs" >Side 1 af 1</text>
<rect x="32.6" y="475.5" width="0.6" height="14" fill="#555" />
<path d="M38 479.4 H43.8 M38 482.3 H43.8" stroke="#bdbdbd" stroke-width="0.75" fill="none" />
<path d="M38.5 483.1 V485.8 M40.3 483.1 V485.8" stroke="#7f9fd0" stroke-width="0.7" fill="none" />
<path d="M41.9 484.5 H44" stroke="#bdbdbd" stroke-width="0.75" fill="none" />
<text x="48.5" y="485.2" font-size="6.4" fill="#dcdcdc" text-anchor="start" font-weight="normal" textLength="28.6" lengthAdjust="spacingAndGlyphs" >Word count</text>
<rect x="670.5" y="475.5" width="0.6" height="14" fill="#555" />
<text x="675.5" y="485.2" font-size="6.4" fill="#dcdcdc" text-anchor="start" font-weight="normal" textLength="42" lengthAdjust="spacingAndGlyphs" >Dansk – Danmark</text>
<path d="M722 482.8 L723 483.8 L724 482.8" stroke="#c6c6c6" stroke-width="0.5" fill="none" />
<circle cx="731.9" cy="482.9" r="3.9" stroke="#c6c6c6" stroke-width="0.7" fill="none"/>
<path d="M728 482.9 H735.8 M731.9 479 V486.8 M729.4 480.4 Q731.9 481.6 734.4 480.4 M729.4 485.4 Q731.9 484.2 734.4 485.4" stroke="#c6c6c6" stroke-width="0.6" fill="none" />
<rect x="739.5" y="477.4" width="10.3" height="10.4" fill="#575757" rx="1"/>
<path d="M742.8 485.9 H741.6 Q741.1 485.9 741.1 485.4 V479.5 Q741.1 479 741.6 479 H747.5 Q748 479 748 479.5 V483" stroke="#c6c6c6" stroke-width="0.6" fill="none" />
<path d="M743.2 484.6 L744.5 480.6 L745.8 484.6 M743.7 483.2 H745.3" stroke="#e0e0e0" stroke-width="0.55" fill="none" />
<path d="M746 485.8 L746.8 486.6 L748.9 484.2" stroke="#6f9fe0" stroke-width="0.65" fill="none" />
<rect x="753.5" y="475.5" width="0.6" height="14" fill="#555" />
<path d="M758 479.6 H760.6 M758 481.4 H761.2" stroke="#6f9fe0" stroke-width="0.6" fill="none" />
<path d="M763.6 478.8 Q764.6 478 765.2 478.8 Q765.8 479.6 765 480.3 L760.8 484.6 Q760 485.2 759.4 484.6 Q758.8 483.9 759.5 483.2 L763 479.6" stroke="#c6c6c6" stroke-width="0.6" fill="none" />
<path d="M769.2 482.3 L770.6 483.6 L772 482.3" stroke="#c6c6c6" stroke-width="0.5" fill="none" />
<rect x="777.3" y="475.5" width="0.6" height="14" fill="#555" />
<rect x="783.2" y="478.9" width="5.4" height="7.8" fill="none" stroke="#c0c0c0" stroke-width="0.65" rx="0.4"/>
<path d="M784.4 480.2 L785.6 482.6 L784.4 485.2 M787.4 480.2 L786.2 482.6 L787.4 485.2" stroke="#6f9fe0" stroke-width="0.45" fill="none" />
<path d="M797 486.3 V478.9 H803.3 V486.3" stroke="#c0c0c0" stroke-width="0.65" fill="none" />
<path d="M797.4 486.3 H802.9 M798.6 485.4 L797.5 486.3 L798.6 487.2 M801.7 485.4 L802.8 486.3 L801.7 487.2" stroke="#6f9fe0" stroke-width="0.55" fill="none" />
<path d="M811.2 482.4 H817.6" stroke="#c6c6c6" stroke-width="0.7" fill="none" />
<text x="823.5" y="485.2" font-size="6.4" fill="#dcdcdc" text-anchor="start" font-weight="normal" textLength="29.8" lengthAdjust="spacingAndGlyphs" >Zoom 100%</text>
<path d="M858.6 482.6 H865.1 M861.85 479.4 V485.8" stroke="#d8d8d8" stroke-width="0.7" fill="none" />
</svg>
</body></html>
